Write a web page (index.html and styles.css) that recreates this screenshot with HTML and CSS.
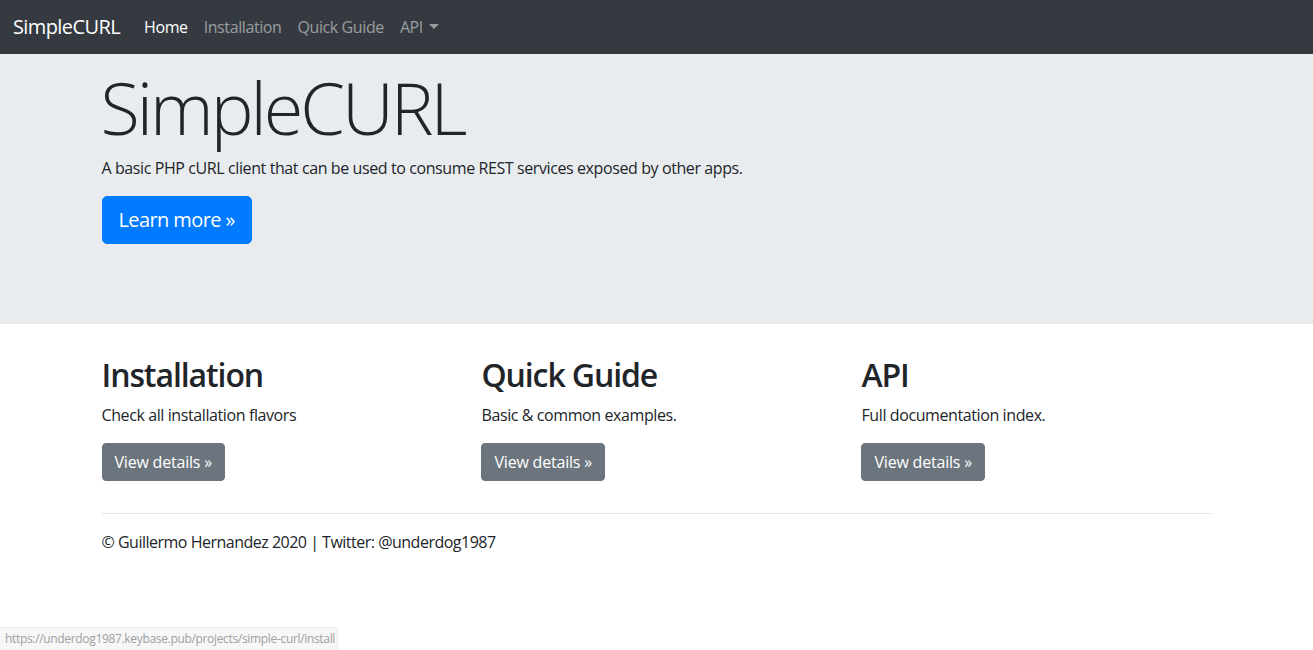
FILE: index.html
```html
<!DOCTYPE html>
<html lang="en">
<head>
<meta charset="utf-8">
<title>SimpleCURL</title>
<link rel="stylesheet" href="styles.css">
</head>
<body>
<nav class="navbar">
  <a class="brand" href="#">SimpleCURL</a>
  <ul class="nav">
    <li><a class="nav-link active" href="#">Home</a></li>
    <li><a class="nav-link" href="#">Installation</a></li>
    <li><a class="nav-link" href="#">Quick Guide</a></li>
    <li><a class="nav-link dropdown" href="#">API</a></li>
  </ul>
</nav>
<main>
  <section class="jumbotron">
    <div class="container">
      <h1 class="display">SimpleCURL</h1>
      <p class="lead-text">A basic PHP cURL client that can be used to consume REST services exposed by other apps.</p>
      <p class="cta"><a class="btn btn-primary btn-lg" href="#">Learn more &raquo;</a></p>
    </div>
  </section>
  <div class="container">
    <div class="row">
      <div class="col">
        <h2>Installation</h2>
        <p>Check all installation flavors</p>
        <p class="cta"><a class="btn btn-secondary" href="#">View details &raquo;</a></p>
      </div>
      <div class="col">
        <h2>Quick Guide</h2>
        <p>Basic &amp; common examples.</p>
        <p class="cta"><a class="btn btn-secondary" href="#">View details &raquo;</a></p>
      </div>
      <div class="col">
        <h2>API</h2>
        <p>Full documentation index.</p>
        <p class="cta"><a class="btn btn-secondary" href="#">View details &raquo;</a></p>
      </div>
    </div>
    <hr class="rule">
  </div>
</main>
<footer class="container footer">
  <p>&copy; Guillermo Hernandez 2020 | Twitter: @underdog1987</p>
</footer>
<div class="statusbar">https://underdog1987.keybase.pub/projects/simple-curl/install</div>
</body>
</html>
```
FILE: styles.css
```css
* { box-sizing: border-box; }
html, body { margin: 0; padding: 0; }
body {
  font-family: "Open Sans", "Noto Sans", sans-serif;
  font-size: 16px;
  line-height: 1.5;
  letter-spacing: -0.4px;
  color: #212529;
  background: #fff;
}
a { text-decoration: none; }
p { margin: 0 0 16px; }

.navbar {
  height: 54px;
  background: #343a40;
  display: flex;
  align-items: center;
  padding: 0 16px 0 13px;
}
.brand {
  color: #fff;
  font-size: 20px;
  line-height: 30px;
  letter-spacing: -0.6px;
  margin-right: 16px;
}
.nav {
  display: flex;
  list-style: none;
  margin: 0;
  padding: 0;
}
.nav-link {
  display: block;
  padding: 8px;
  letter-spacing: -0.4px;
  color: rgba(255,255,255,.5);
}
.nav-link.active { color: #fff; }
.dropdown::after {
  content: "";
  display: inline-block;
  margin-left: .35em;
  vertical-align: .255em;
  border-top: .32em solid;
  border-right: .32em solid transparent;
  border-left: .32em solid transparent;
}

.container {
  width: 1140px;
  margin: 0 auto;
  padding: 0 15px;
}
.jumbotron {
  background: #e9ecef;
  padding: 10px 0 64px;
  margin-bottom: 32px;
}
.display {
  font-size: 72px;
  font-weight: 300;
  line-height: 1.2;
  letter-spacing: -3px;
  margin: 0 0 6px -1px;
}
.lead-text { margin-bottom: 16px; }

.btn {
  display: inline-block;
  font-weight: 400;
  color: #fff;
  border: 1px solid transparent;
  padding: 6px 12px;
  font-size: 16px;
  line-height: 24px;
  letter-spacing: -0.2px;
  border-radius: 4px;
}
.btn-lg {
  padding: 8px 16px;
  font-size: 20px;
  line-height: 30px;
  letter-spacing: -0.6px;
  border-radius: 5px;
}
.btn-primary { background: #007bff; border-color: #007bff; }
.btn-secondary { background: #6c757d; border-color: #6c757d; }

.row {
  display: flex;
  margin: 0 -15px;
}
.col {
  flex: 0 0 33.3333%;
  padding: 0 15px;
}
h2 {
  font-size: 32px;
  font-weight: 600;
  line-height: 1.2;
  letter-spacing: -1.1px;
  margin: 0 0 8px;
}
.rule {
  border: 0;
  border-top: 1px solid rgba(0,0,0,.1);
  margin: 16px 0;
}
.footer p { margin: 0 0 16px; letter-spacing: -0.5px; }

.statusbar {
  position: fixed;
  left: 0;
  bottom: 0;
  height: 23px;
  padding: 0 2px 0 5px;
  background: #f7f7f7;
  border-top: 1px solid #ebebeb;
  border-right: 1px solid #ebebeb;
  border-top-right-radius: 3px;
  color: #a0a0a0;
  font-size: 12px;
  line-height: 22px;
  letter-spacing: -0.33px;
}
```
